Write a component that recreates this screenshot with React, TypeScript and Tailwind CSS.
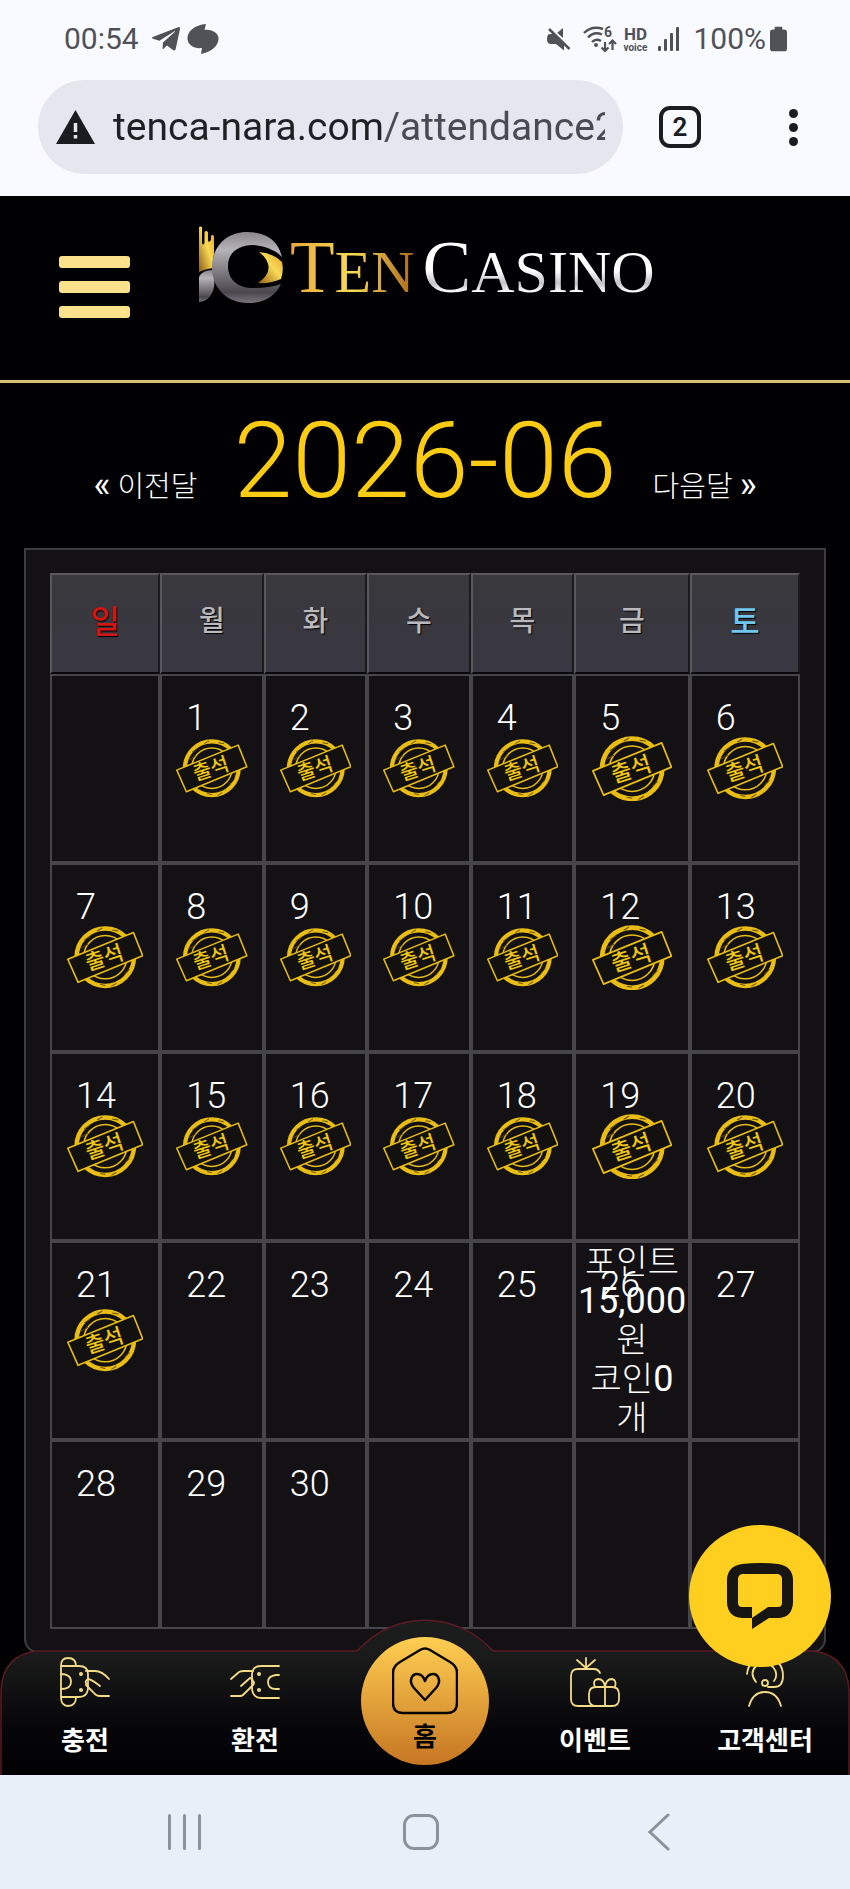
import { FaTelegramPlane } from "react-icons/fa";

type DayCell = { day?: number; stamped?: boolean; reward?: boolean };

const weekdays = [
  { label: "일", width: "w-[14.7%]", style: "text-[32px] font-medium text-[#d31613]" },
  { label: "월", width: "w-[13.8%]", style: "text-[28px] font-medium text-[#bab9be]" },
  { label: "화", width: "w-[13.8%]", style: "text-[28px] font-medium text-[#bab9be]" },
  { label: "수", width: "w-[13.8%]", style: "text-[28px] font-medium text-[#bab9be]" },
  { label: "목", width: "w-[13.8%]", style: "text-[28px] font-medium text-[#bab9be]" },
  { label: "금", width: "w-[15.4%]", style: "text-[28px] font-medium text-[#bab9be]" },
  { label: "토", width: "w-[14.7%]", style: "text-[32px] font-medium text-[#6fc6ee]" },
];

const FIRST_WEEKDAY = 1;
const DAYS_IN_MONTH = 30;
const LAST_ATTENDED = 21;
const REWARD_DAY = 26;

const weeks: DayCell[][] = Array.from({ length: 5 }, (_, week) =>
  Array.from({ length: 7 }, (_, weekday) => {
    const day = week * 7 + weekday - FIRST_WEEKDAY + 1;
    if (day < 1 || day > DAYS_IN_MONTH) return {};
    return { day, stamped: day <= LAST_ATTENDED, reward: day === REWARD_DAY };
  }),
);

function StatusBar() {
  return (
    <div className="flex h-20 items-center justify-between pr-[63px] pl-16 text-[30px] leading-none text-[#505257]">
      <div className="flex items-center pb-[2px]">
        <span>00:54</span>
        <FaTelegramPlane className="ml-3 h-8 w-[30px]" />
        <svg className="ml-[6px] h-[30px] w-8" viewBox="0 0 32 30" fill="currentColor">
          <path d="M19 0L17.500 6C25 5 31 9 31.500 14C32 22 24 28 14 30L15 24C7 25 1 21 .5 15C0 7 8 1 19 0Z" />
        </svg>
      </div>
      <div className="flex items-center pb-[2px]">
        <svg className="h-6 w-6" viewBox="0 0 24 24" fill="currentColor">
          <path d="M16 1V11L10 6Z" />
          <path d="M3 7H7L17 16V23.500L9 17H4Q0 17 0 12Q0 7 3 7Z" />
          <path d="M5 2L24 21" stroke="#f8faff" strokeWidth="2" />
          <path d="M2 2L22.500 22" stroke="currentColor" strokeWidth="2.500" />
        </svg>
        <svg className="ml-3 h-7 w-[34px]" viewBox="0 0 34 28" fill="none" stroke="currentColor" strokeWidth="2.400">
          <path d="M1 8Q9 0 20 4" />
          <path d="M5 12.500Q11 6 19 9.500" />
          <path d="M9 17Q13 13 18 16" />
          <circle cx="13" cy="20" r="2" fill="currentColor" stroke="none" />
          <path d="M22 17V26M18.500 22.500L22 26L25.500 22.500M29.500 25V15.500M26 19L29.500 15.500L33 19" strokeWidth="2.200" />
          <text x="21" y="12" fontSize="14" fontWeight="700" fill="currentColor" stroke="none">6</text>
        </svg>
        <div className="ml-1 flex w-7 flex-col items-center font-bold">
          <span className="text-[17px] leading-[17px]">HD</span>
          <span className="text-[10px] leading-[10px]">voice</span>
        </div>
        <svg className="ml-2 h-6 w-6" viewBox="0 0 24 24" fill="currentColor">
          <rect x="1" y="19" width="3" height="5" rx="1" />
          <rect x="7" y="12" width="3" height="12" rx="1" />
          <rect x="13" y="6" width="3" height="18" rx="1" />
          <rect x="19" y="0" width="3" height="24" rx="1" />
        </svg>
        <span className="ml-3">100%</span>
        <svg className="ml-1 h-[26px] w-[17px]" viewBox="0 0 18 26" fill="currentColor">
          <path d="M5 0H13V3H15Q18 3 18 6V23Q18 26 15 26H3Q0 26 0 23V6Q0 3 3 3H5Z" />
        </svg>
      </div>
    </div>
  );
}

function AddressBar() {
  return (
    <div className="flex items-center pr-[38px] pb-[22px] pl-[38px]">
      <label className="flex h-[94px] min-w-0 flex-1 items-center gap-[18px] rounded-full bg-[#e5e7ef] pr-[18px] pl-[18px]">
        <svg className="h-[34px] w-[39px] shrink-0" viewBox="0 0 39 34" role="img" aria-label="주의 요함">
          <path d="M19.500 0L39 34H0Z" fill="#1b1c20" />
          <path d="M19.500 13V22M19.500 25V28.500" stroke="#e5e7ef" strokeWidth="3.500" />
        </svg>
        <input
          type="text"
          aria-label="주소"
          defaultValue="tenca-nara.com/attendance2"
          className="w-full min-w-0 bg-linear-to-r from-[#1f2024] from-[272px] to-[#484b50] to-[272px] bg-clip-text text-[39px] leading-[50px] text-transparent outline-none"
        />
      </label>
      <button
        type="button"
        aria-label="탭 2개"
        className="ml-9 flex h-[42px] w-[42px] shrink-0 items-center justify-center rounded-[11px] border-4 border-[#1b1c20] text-[26px] leading-none font-semibold text-[#1b1c20]"
      >
        2
      </button>
      <button type="button" aria-label="메뉴" className="ml-[73px] flex w-[38px] shrink-0 flex-col items-center gap-[5px]">
        <span className="h-[9px] w-[9px] rounded-full bg-[#1b1c20]" />
        <span className="h-[9px] w-[9px] rounded-full bg-[#1b1c20]" />
        <span className="h-[9px] w-[9px] rounded-full bg-[#1b1c20]" />
      </button>
    </div>
  );
}

function LogoMark() {
  return (
    <svg className="h-[78px] w-[86px]" viewBox="0 0 86 78">
      <defs>
        <linearGradient id="silver" x1="0" y1="0" x2="0" y2="1">
          <stop offset="0" stopColor="#8a888d" />
          <stop offset=".25" stopColor="#b5b3b8" />
          <stop offset=".6" stopColor="#77757b" />
          <stop offset=".85" stopColor="#49474d" />
          <stop offset="1" stopColor="#77757b" />
        </linearGradient>
        <linearGradient id="gold" x1="0" y1="1" x2="1" y2="0">
          <stop offset="0" stopColor="#8f5d12" />
          <stop offset=".55" stopColor="#f9d955" />
          <stop offset="1" stopColor="#e0a12c" />
        </linearGradient>
      </defs>
      <path d="M1 1Q2 0 4 1V17Q5 20 6.500 17V6Q8 4 10 6V15Q11 17 13 14V10Q14 8 16 10V28Q14 36 15 42Q7 43 1 46Z" fill="url(#gold)" />
      <path d="M1 76V51Q4 44 15 44Q17 56 16 61Q13 75 1 76Z" fill="url(#silver)" />
      <path
        d="M84 31Q78 6 49 6C28 6 14 21 14 42C14 62 29 77 50 77Q74 77 83 58Q72 62 55 62C40 62 30 54 30 40C30 27 40 19 55 19Q73 20 84 31Z"
        fill="url(#silver)"
      />
      <path d="M61 26Q75 27 84 36Q86 44 83 53Q72 58 60 57Q73 48 70 38Q68 31 61 26Z" fill="url(#gold)" />
    </svg>
  );
}

function SiteHeader() {
  return (
    <header className="flex h-[187px] items-start border-b-[3px] border-[#d6bd78] bg-[#010003] pl-[59px]">
      <button type="button" aria-label="메뉴 열기" className="mt-[60px] flex w-[71px] flex-col gap-[13px]">
        <span className="h-3 w-full rounded-[3px] bg-[#fae18c]" />
        <span className="h-3 w-full rounded-[3px] bg-[#fae18c]" />
        <span className="h-3 w-full rounded-[3px] bg-[#fae18c]" />
      </button>
      <a href="#home" className="ml-[68px] flex items-start pt-[30px] font-['Liberation_Serif',serif] text-[60px] leading-[84px]">
        <LogoMark />
        <span className="ml-[6px] bg-linear-to-r from-[#e9a63a] via-[#f9db56] to-[#a9691c] bg-clip-text text-transparent">
          <span className="text-[73px]">T</span>EN
        </span>
        <span className="ml-2 bg-linear-to-b from-white from-50% via-[#c4c3c8] via-65% to-white to-75% bg-clip-text text-transparent">
          <span className="text-[73px]">C</span>ASINO
        </span>
      </a>
    </header>
  );
}

function Stamp() {
  return (
    <svg className="mx-auto w-[72%]" viewBox="0 0 76 62" role="img" aria-label="출석">
      <g fill="none" stroke="#e9bd13">
        <circle cx="38" cy="31" r="28.500" strokeWidth="4.500" />
        <circle cx="38" cy="31" r="21.500" strokeWidth="1.500" />
      </g>
      <path
        d="M17 14L23 10M30 5L35 2M45 4L51 5M21 18L14 22M57 48L62 43M49 57L44 60M33 58L38 59"
        stroke="#5d4a0b"
        strokeWidth="1"
      />
      <path d="M.8 33L66 6.500L75.200 29.500L11 56Z" fill="#121110" stroke="#e9bd13" strokeWidth="1.600" strokeLinejoin="round" />
      <text
        x="37"
        y="38.500"
        textAnchor="middle"
        fontSize="21"
        fontWeight="500"
        fill="#f0c615"
        transform="rotate(-18 38 31)"
      >
        출석
      </text>
    </svg>
  );
}

function Calendar() {
  return (
    <section className="mx-6 rounded-b-[14px] border-2 border-[#3d3c40] bg-[#131114] px-6 pt-[23px] pb-[22px]">
      <table className="w-full table-fixed border-separate border-spacing-0">
        <thead>
          <tr>
            {weekdays.map((weekday) => (
              <th
                key={weekday.label}
                scope="col"
                className={`h-[101px] border-2 border-t-[#59585d] border-r-[#1b1a1e] border-b-[#08080a] border-l-[#59585d] bg-linear-to-b from-[#39383c] to-[#393741] p-0 pb-1 text-center leading-10 text-shadow-[1px_1px_1px_#000] ${weekday.width} ${weekday.style}`}
              >
                {weekday.label}
              </th>
            ))}
          </tr>
        </thead>
        <tbody>
          {weeks.map((week, index) => (
            <tr key={index}>
              {week.map((cell, weekday) => (
                <td key={weekday} className="relative h-[189px] border-2 border-[#464549] p-0 text-center align-middle text-white">
                  {cell.day && <span className="absolute top-[21px] left-6 text-[36px] leading-[42px] font-light">{cell.day}</span>}
                  {cell.stamped && <Stamp />}
                  {cell.reward && (
                    <div className="text-[34px] leading-[39px] font-light">
                      포인트
                      <br />
                      <span className="text-[36px] font-normal">15,000</span>
                      <br />원<br />
                      코인<span className="text-[36px] font-normal">0</span>
                      <br />개
                    </div>
                  )}
                </td>
              ))}
            </tr>
          ))}
        </tbody>
      </table>
    </section>
  );
}

function ChargeIcon() {
  return (
    <svg className="h-[50px] w-[50px]" viewBox="0 0 50 50" fill="none" stroke="#f3da84" strokeWidth="1.800" strokeLinecap="round">
      <path d="M1 9V41M1 9H19Q28 9 28 17V32Q27 40 19 40H1M1 9Q1 1 8 1Q16 1 16 9M1 40Q1 49 8 49Q16 49 16 40" />
      <path d="M1 17Q11 17 11 25Q11 32 1 32" />
      <path d="M26 14H35Q42 14 49 22M27 28Q24 24 28 22Q31 22 40 29M26 28L34 36Q36 39 40 39H49" />
      <circle cx="21" cy="17" r="2" fill="#f3da84" stroke="none" />
      <circle cx="21" cy="33" r="2" fill="#f3da84" stroke="none" />
    </svg>
  );
}

function WithdrawIcon() {
  return (
    <svg className="h-[50px] w-[50px]" viewBox="0 0 50 50" fill="none" stroke="#f3da84" strokeWidth="1.800" strokeLinecap="round">
      <path d="M49 9H31Q22 9 22 18V32Q23 41 31 41H49M49 18H46Q38 19 38 25Q38 32 46 32H49" />
      <path d="M1 22L9 15Q11 14 14 14H23M11 29L20 21Q22 21 23 24Q25 26 23 28L13 38Q12 39 10 39H1" />
      <circle cx="29" cy="17" r="2" fill="#f3da84" stroke="none" />
      <circle cx="29" cy="33" r="2" fill="#f3da84" stroke="none" />
    </svg>
  );
}

function EventIcon() {
  return (
    <svg className="h-[50px] w-[50px]" viewBox="0 0 50 50" fill="none" stroke="#f3da84" strokeWidth="1.800" strokeLinecap="round">
      <path d="M16 1V10M7 3L16 11L25 3M30 16Q28 12 24 12H8Q1 12 1 19V42Q1 49 8 49H42Q49 49 49 42V37Q49 30 42 30H26Q19 30 19 37V42Q19 49 26 49" />
      <path d="M35 30V49M35 30Q34 22 28 22Q22 23 25 30M35 30Q36 22 42 22Q47 23 45 30" />
    </svg>
  );
}

function SupportIcon() {
  return (
    <svg className="h-[50px] w-[50px]" viewBox="0 0 50 50" fill="none" stroke="#f3da84" strokeWidth="1.800" strokeLinecap="round">
      <path d="M9 49Q13 35 25 35Q37 35 41 49M7 17Q9 1 25 1Q43 2 43 19Q43 30 34 30H28" />
      <path d="M16 25Q9 16 16 9Q24 2 33 10Q39 17 34 24" />
      <circle cx="25" cy="26" r="3" />
    </svg>
  );
}

function HomeIcon() {
  return (
    <svg className="h-[68px] w-[66px]" viewBox="0 0 66 68" fill="none" stroke="#090600" strokeWidth="2.500">
      <path d="M28 3Q33 0 38 3L58 15Q65 19 65 26V56Q65 66 55 66H11Q1 66 1 56V26Q1 19 8 15Z" />
      <path d="M33 53L22 41C16 34 20 27 25 27C30 27 32 31 33 34C34 31 36 27 41 27C46 27 50 34 44 41Z" strokeLinejoin="round" />
    </svg>
  );
}

const navItems = [
  { label: "충전", href: "#charge", icon: ChargeIcon },
  { label: "환전", href: "#withdraw", icon: WithdrawIcon },
  { label: "홈", href: "#home", icon: HomeIcon, home: true },
  { label: "이벤트", href: "#event", icon: EventIcon },
  { label: "고객센터", href: "#support", icon: SupportIcon },
];

function BottomNav() {
  return (
    <nav className="relative -mt-[2px] h-[124px]">
      <svg className="absolute bottom-0 left-0 h-[156px] w-full" viewBox="0 0 850 156" preserveAspectRatio="none">
        <defs>
          <linearGradient id="bar" x1="0" y1="0" x2="0" y2="1">
            <stop offset="0" stopColor="#1c1d1d" />
            <stop offset=".25" stopColor="#191a19" />
            <stop offset=".7" stopColor="#060509" />
            <stop offset="1" stopColor="#010002" />
          </linearGradient>
        </defs>
        <path
          d="M1 158V71Q3 36 37 32H355Q358 32 360 29A90 90 0 0 1 490 29Q492 32 495 32H813Q847 36 849 71V158Z"
          fill="url(#bar)"
          stroke="#5e1a22"
          strokeWidth="1.500"
        />
      </svg>
      <ul className="relative grid h-full grid-cols-5">
        {navItems.map(({ label, href, icon: Icon, home }) => (
          <li key={label} className="flex justify-center">
            {home ? (
              <a
                href={href}
                className="-mt-[14px] flex h-32 w-32 shrink-0 flex-col items-center rounded-full bg-linear-to-b from-[#ffcf52] to-[#c57623] pt-[10px] text-[26px] leading-9 font-bold text-black"
              >
                <Icon />
                <span className="mt-1">{label}</span>
              </a>
            ) : (
              <a href={href} className="flex flex-col items-center pt-[6px] text-[26px] leading-9 font-bold whitespace-nowrap text-white">
                <Icon />
                <span className="mt-4">{label}</span>
              </a>
            )}
          </li>
        ))}
      </ul>
      <button
        type="button"
        aria-label="채팅 상담"
        className="absolute -top-[126px] right-[19px] flex h-[142px] w-[142px] items-center justify-center rounded-full bg-[#ffcf20]"
      >
        <svg className="h-[66px] w-[66px]" viewBox="0 0 66 66">
          <path
            d="M15 1Q33 -1 51 1Q65 3 66 16Q67 28 66 40Q65 54 52 55H42L25 66V44H11V12H55V44H41L25 55H15Q1 54 0 40Q-1 28 0 16Q1 3 15 1Z"
            fill="#161511"
          />
          <path d="M15 11H51Q55 12 55 16V40Q55 44 51 44H41L25 55V44H15Q11 44 11 40V16Q11 12 15 11Z" fill="#ffcf20" />
        </svg>
      </button>
    </nav>
  );
}

function SystemNav() {
  return (
    <div className="grid h-[114px] grid-cols-[1fr_auto_1fr] items-center bg-[#e8eff9] pr-2">
      <button type="button" aria-label="최근 앱" className="mr-[202px] flex h-9 justify-end gap-3">
        <span className="w-[3px] rounded-full bg-[#8b9299]" />
        <span className="w-[3px] rounded-full bg-[#8b9299]" />
        <span className="w-[3px] rounded-full bg-[#8b9299]" />
      </button>
      <button type="button" aria-label="홈 화면" className="h-9 w-9 rounded-[11px] border-[3px] border-[#8b9299]" />
      <button type="button" aria-label="뒤로" className="ml-[209px]">
        <svg className="h-[38px] w-[22px]" viewBox="0 0 22 38" fill="none" stroke="#8b9299" strokeWidth="3" strokeLinecap="round">
          <path d="M20 2L2 19L20 36" />
        </svg>
      </button>
    </div>
  );
}

export default function App() {
  return (
    <div className="w-full bg-[#010003] font-[Roboto,'Noto_Sans_CJK_KR',sans-serif]">
      <div className="bg-[#f8faff]">
        <StatusBar />
        <AddressBar />
      </div>
      <SiteHeader />
      <main>
        <div className="flex h-[165px] items-baseline justify-center pt-[18px] text-[29px] font-light text-white">
          <a href="#prev">
            <span className="text-[36px] font-normal">«</span> 이전달
          </a>
          <h1 className="mx-9 text-[106px] leading-[120px] text-[#fccc13]">2026-06</h1>
          <a href="#next">
            다음달 <span className="text-[36px] font-normal">»</span>
          </a>
        </div>
        <Calendar />
      </main>
      <BottomNav />
      <SystemNav />
    </div>
  );
}
